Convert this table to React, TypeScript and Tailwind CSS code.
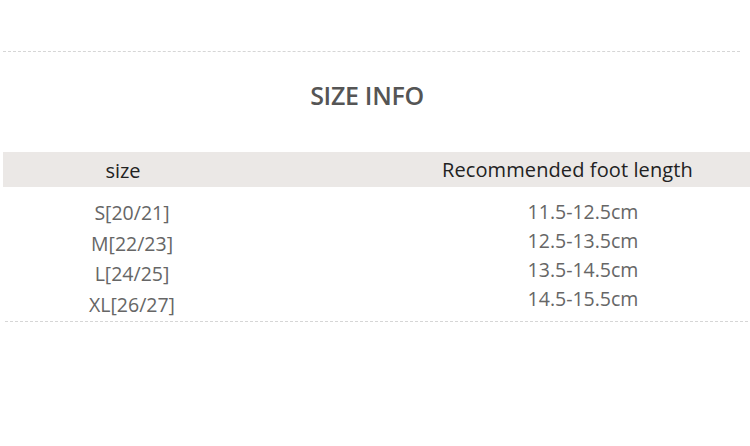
const rows = [
  { size: 'S[20/21]', foot: '11.5-12.5cm' },
  { size: 'M[22/23]', foot: '12.5-13.5cm' },
  { size: 'L[24/25]', foot: '13.5-14.5cm' },
  { size: 'XL[26/27]', foot: '14.5-15.5cm' },
]

export default function App() {
  return (
    <div className="w-[750px] h-[446px] bg-white overflow-hidden font-['Open_Sans','Noto_Sans',sans-serif]">
      {/* top rule */}
      <div className="pt-[51px] pl-[3px] pr-[10px]">
        <div className="border-t border-dashed border-[#d6d6d6]" />
      </div>

      {/* title */}
      <div className="h-[100px] flex items-center justify-center pb-[12px]">
        <h1 className="text-[25px] font-semibold text-[#555] tracking-[-0.3px] pr-[16px]">SIZE INFO</h1>
      </div>

      {/* header band */}
      <div className="ml-[3px] h-[35px] bg-[#ebe8e6] flex items-center text-[20px] text-[#222]">
        <div className="w-[240px] shrink-0 text-center pt-[2px]">size</div>
        <div className="ml-[199px] shrink-0 whitespace-nowrap tracking-[0.1px]">Recommended foot length</div>
      </div>

      {/* rows */}
      <div className="flex pt-[10px] h-[134px]">
        <div className="w-[264px] flex flex-col pt-[1px]">
          {rows.map((r, i) => (
            <div
              key={r.size}
              className={`leading-[30px] text-center text-[19.5px] text-[#666] ${i === 3 ? 'h-[28px]' : 'h-[30.5px]'}`}
            >
              {r.size}
            </div>
          ))}
        </div>
        <div className="ml-[219px] w-[200px] flex flex-col">
          {rows.map((r) => (
            <div key={r.foot} className="h-[29px] leading-[29px] text-center text-[19.5px] text-[#666]">
              {r.foot}
            </div>
          ))}
        </div>
      </div>

      {/* bottom rule */}
      <div className="pl-[5px] pr-[2px]">
        <div className="border-t border-dashed border-[#d6d6d6]" />
      </div>
    </div>
  )
}
